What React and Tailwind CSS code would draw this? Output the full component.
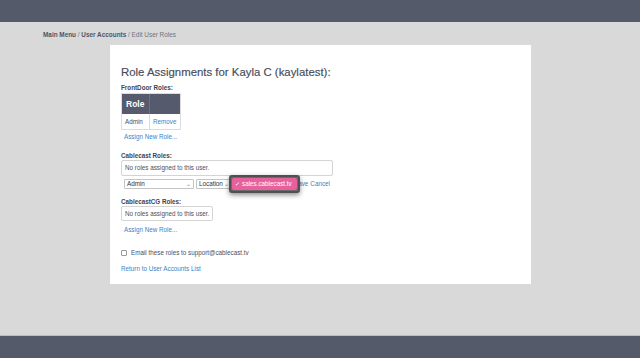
export default function App() {
  const font = { fontFamily: '"Liberation Sans", Arial, sans-serif' };
  return (
    <div style={font} className="flex h-[358px] w-[640px] flex-col overflow-hidden bg-[#d9d9d9]">
      <div className="h-[22px] shrink-0 bg-[#555a6b]" />

      <div className="flex-1">
        <div className="pl-[43px] pt-[9px] text-[6.4px] leading-[8px] text-[#70737c]">
          <span className="font-bold text-[#4f5465]">Main Menu</span>
          <span> / </span>
          <span className="font-bold text-[#4f5465]">User Accounts</span>
          <span> / Edit User Roles</span>
        </div>

        <div className="ml-[110px] mt-[6px] h-[239px] w-[421px] bg-white pl-[11px] pt-[19px]">
          <h1 className="text-[11.4px] leading-[16px] text-[#464b5a] [-webkit-text-stroke:0.15px_#464b5a]">
            Role Assignments for Kayla C (kaylatest):
          </h1>

          <div className="mt-[4px] text-[6.3px] font-bold leading-[8px] text-[#3e4352]">FrontDoor Roles:</div>
          <div className="mt-[1px] w-[60px] border border-[#dcdcdc]">
            <div className="flex h-[20px] bg-[#555a6c]">
              <div className="flex w-[28px] items-center border-r border-[#6d7282] pl-[4px] text-[8.5px] font-bold text-white">
                Role
              </div>
              <div className="flex-1" />
            </div>
            <div className="flex h-[15px] text-[6.3px]">
              <div className="flex w-[28px] items-center border-r border-[#dcdcdc] pl-[3px] text-[#4a4f5e]">Admin</div>
              <div className="flex items-center pl-[3px] text-[#3b82c4]">Remove</div>
            </div>
          </div>
          <div className="mt-[3px] pl-[3px] text-[6.3px] leading-[8px] text-[#3b82c4]">Assign New Role...</div>

          <div className="mt-[11px] text-[6.3px] font-bold leading-[8px] text-[#3e4352]">Cablecast Roles:</div>
          <div className="flex h-[16px] w-[212px] items-center whitespace-nowrap rounded-[2px] border border-[#d4d4d4] pl-[3px] text-[6.3px] text-[#4a4f5e]">
            No roles assigned to this user.
          </div>

          <div className="relative mt-[3px] flex h-[10px] items-center pl-[3px] text-[6.3px]">
            <div className="flex h-[10px] w-[70px] items-center justify-between rounded-[1px] border border-[#c4c4c4] px-[2px] text-[#333]">
              <span>Admin</span>
              <span className="text-[6px] text-[#888]">⌄</span>
            </div>
            <div className="ml-[2px] flex h-[10px] w-[36px] items-center justify-between rounded-[1px] border border-[#c4c4c4] px-[2px] text-[#333]">
              <span>Location</span>
              <span className="text-[6px] text-[#888]">⌄</span>
            </div>
            <div className="ml-[2px] h-[10px] w-[56px] rounded-[1px] border border-[#c4c4c4]" />
            <span className="ml-[4px] text-[#3b82c4]">Save</span>
            <span className="ml-[2px] text-[#3b82c4]">Cancel</span>

            <div className="absolute left-[108px] top-[-4px] rounded-[3px] border-2 border-[#505050] bg-[#6a6a6a] p-[1px] shadow-[0_2px_5px_rgba(0,0,0,0.45)]">
              <div className="flex h-[12px] w-[65px] items-center rounded-[2px] bg-[#e8609c] pl-[3px] text-[6.3px] text-white">
                <span className="mr-[2px]">✓</span>
                <span>sales.cablecast.tv</span>
              </div>
            </div>
          </div>

          <div className="mt-[9px] text-[6.3px] font-bold leading-[8px] text-[#3e4352]">CablecastCG Roles:</div>
          <div className="flex h-[15px] w-[92px] items-center whitespace-nowrap rounded-[2px] border border-[#d4d4d4] pl-[3px] text-[6.3px] text-[#4a4f5e]">
            No roles assigned to this user.
          </div>
          <div className="mt-[5px] pl-[3px] text-[6.3px] leading-[8px] text-[#3b82c4]">Assign New Role...</div>

          <div className="mt-[15px] flex items-center text-[6.3px] leading-[8px] text-[#4a4f5e]">
            <span className="mr-[4px] inline-block h-[6px] w-[6px] rounded-[1px] border border-[#999]" />
            Email these roles to support@cablecast.tv
          </div>
          <div className="mt-[8px] text-[6.3px] leading-[8px] text-[#3b82c4]">Return to User Accounts List</div>
        </div>
      </div>

      <div className="h-[23px] shrink-0 border-t border-[#bdbdbd] bg-[#555a6b]" />
    </div>
  );
}
